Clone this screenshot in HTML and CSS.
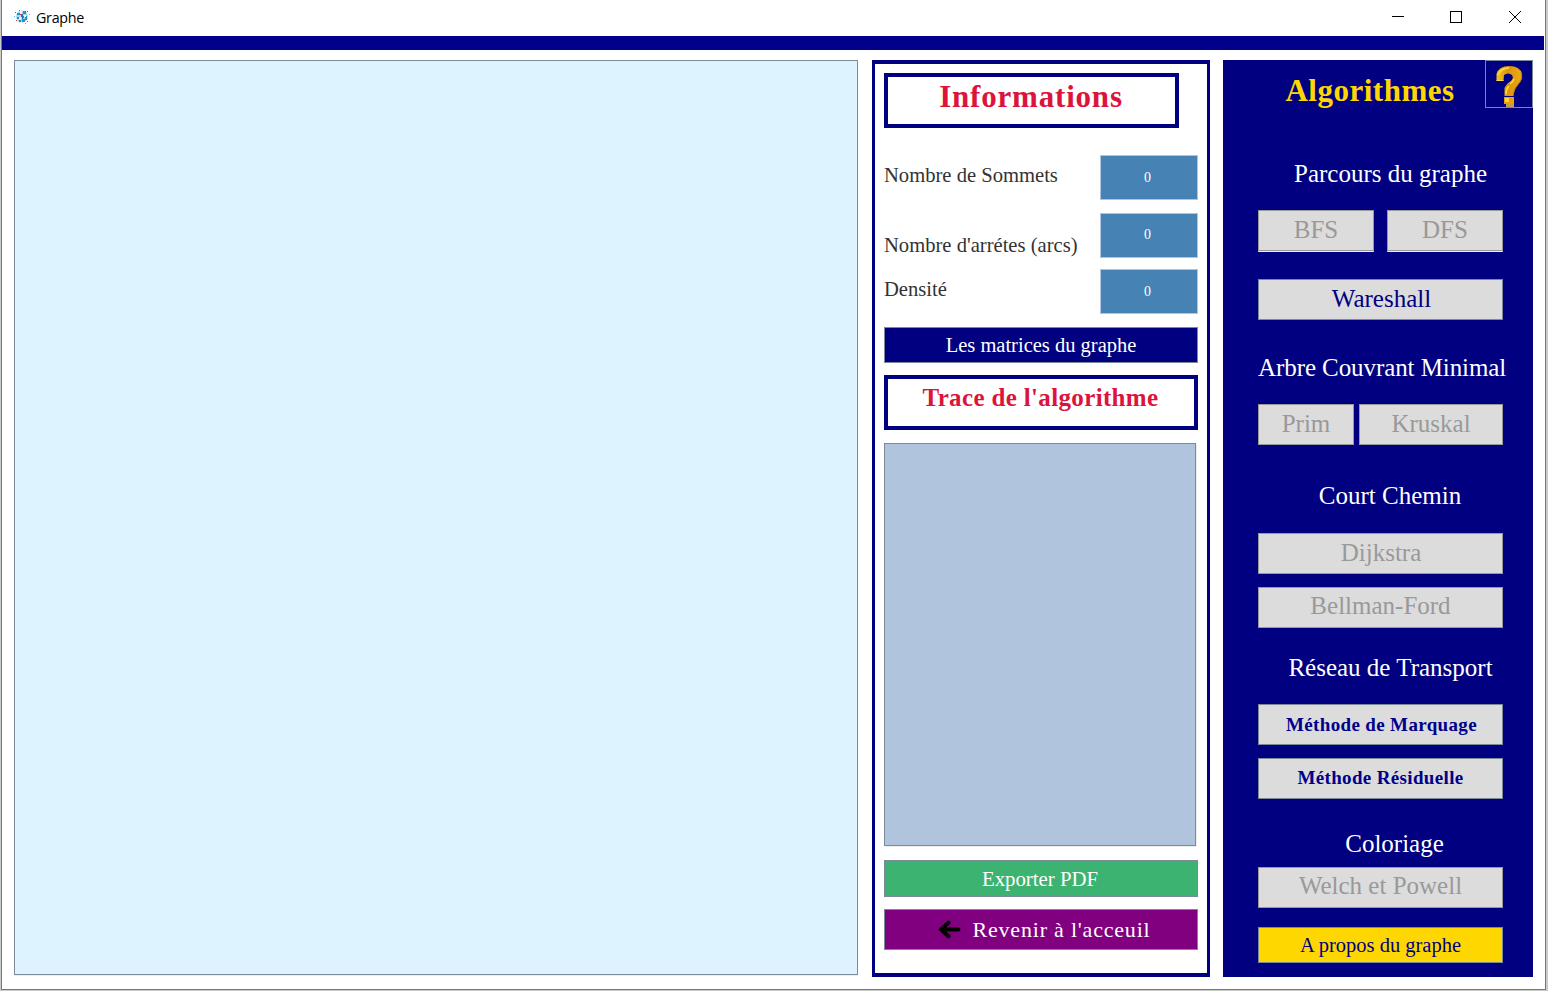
FILE: index.html
```html
<!DOCTYPE html>
<html lang="fr">
<head>
<meta charset="utf-8">
<title>Graphe</title>
<link rel="stylesheet" href="styles.css">
</head>
<body>
<div class="window">
  <header class="titlebar">
    <svg class="app-icon" width="16" height="16" viewBox="0 0 16 16">
      <circle cx="8" cy="7.500" r="6" fill="#a5daf5"/>
      <path d="M3 4h3v2H3zM9 2h3v3H9zM11 7h2v4h-2zM8 10h3v3H8zM3 8h2v2H3z" fill="#1b93dc"/>
      <path d="M6 2h2v3H6zM5 8h2v3H5zM10 6h2v2h-2z" fill="#e4f6fd"/>
      <path d="M7 5h2v3H7zM5 11h2v2H5zM8 8h1v2H8z" fill="#3b6f9c"/>
      <path d="M1 3h1v1H1zM5 1h1v1H5zM13 2h1v1h-1zM5 5h2v1H5zM2 11h1v1H2zM9 7h1v2H9zM13 12h1v1h-1z" fill="#e03a35"/>
      <path d="M0 7h1v1H0zM15 5h1v1h-1zM11 14h1v1h-1z" fill="#4ab5e8"/>
    </svg>
    <span class="app-name">Graphe</span>
    <svg class="controls" width="129" height="14" viewBox="0 0 129 14" fill="none" stroke="#000" shape-rendering="crispEdges">
      <path d="M0 6.5h12"/>
      <path d="M58.5 1.5h11v11h-11z"/>
      <path d="M117 1l12 12M129 1l-12 12" shape-rendering="auto"/>
    </svg>
  </header>
  <div class="strip"></div>
  <main class="content">
    <section class="canvas"></section>
    <section class="info">
      <h2 class="boxed boxed-info">Informations</h2>
      <div class="stat"><span class="stat-name">Nombre de Sommets</span><output class="value">0</output></div>
      <div class="stat stat-edges"><span class="stat-name low">Nombre d'arrétes (arcs)</span><output class="value value-up">0</output></div>
      <div class="stat stat-density"><span class="stat-name">Densité</span><output class="value">0</output></div>
      <button class="btn matrices">Les matrices du graphe</button>
      <h2 class="boxed boxed-trace">Trace de l'algorithme</h2>
      <div class="trace"></div>
      <button class="btn export">Exporter PDF</button>
      <button class="btn back">
        <svg width="24" height="20" viewBox="0 0 24 20"><path d="M10.500 2.700L3 9.500l7.500 6.800M3 9.500H20.500" fill="none" stroke="#000" stroke-width="4" stroke-linecap="round"/></svg>
        <span>Revenir à l'acceuil</span>
      </button>
    </section>
    <aside class="algos">
      <button class="help">
        <svg width="46" height="46" viewBox="0 0 46 46">
          <defs><linearGradient id="gold" x1="0" y1="0" x2="1" y2="0"><stop offset="0" stop-color="#f5c022"/><stop offset=".45" stop-color="#dd950c"/><stop offset="1" stop-color="#efab12"/></linearGradient></defs>
          <path d="M10.500 20L10.500 13Q13 5 23 5Q34 5 36 13Q37 19 32 24Q28 28 27.500 35L18.500 35L18.500 27Q21 22 25 20Q28 17 26 14Q22 11 18 14L17.500 20Z" fill="url(#gold)"/>
          <path d="M12 14Q15 7 23 7" fill="none" stroke="#ffdd3b" stroke-width="1.500"/>
          <path d="M20 33Q20 28 23 25M28 18Q27 21 24 23" fill="none" stroke="#ffdd3b" stroke-width="1.500"/>
          <path d="M10.500 19.500h7" stroke="#ffd83a"/>
          <path d="M35 12Q37 18 32 23Q28 27 27 34" fill="none" stroke="#c17c08"/>
          <path d="M18 36h10v7H18z" fill="#e5a00c"/><path d="M19 37h4v4h-4z" fill="#ffd63a"/><path d="M20 43h8v3h-8z" fill="#c99a4c"/>
        </svg>
      </button>
      <h1 class="title">Algorithmes</h1>
      <h3 class="group parcours">Parcours du graphe</h3>
      <div class="row row-search"><button class="btn algo off">BFS</button><button class="btn algo off">DFS</button></div>
      <button class="btn algo wareshall">Wareshall</button>
      <h3 class="group arbre">Arbre Couvrant Minimal</h3>
      <div class="row row-tree"><button class="btn algo off">Prim</button><button class="btn algo off">Kruskal</button></div>
      <h3 class="group court">Court Chemin</h3>
      <button class="btn algo off dijkstra">Dijkstra</button>
      <button class="btn algo off raised second">Bellman-Ford</button>
      <h3 class="group reseau">Réseau de Transport</h3>
      <button class="btn algo method marquage">Méthode de Marquage</button>
      <button class="btn algo method raised second">Méthode Résiduelle</button>
      <h3 class="group coloriage">Coloriage</h3>
      <button class="btn algo off raised welch">Welch et Powell</button>
      <button class="btn about">A propos du graphe</button>
    </aside>
  </main>
</div>
</body>
</html>
```
FILE: styles.css
```css
* { box-sizing: border-box; }
body { margin: 0; background: #cbcbcb; font-family: "Liberation Serif", "Times New Roman", serif; overflow: hidden; }
h1, h2, h3 { margin: 0; }
button { appearance: none; border-radius: 0; margin: 0; padding: 0; font-family: inherit; }
.window { width: 1545px; height: 990px; margin-left: 1px; background: #fff; border: 1px solid #777; border-top: 0; display: flex; flex-direction: column; }
.titlebar { height: 36px; display: flex; align-items: center; padding: 0 24px 2px 12px; }
.app-name { margin-left: 6px; font: 14.3px "Open Sans", "Noto Sans", sans-serif; letter-spacing: -.3px; color: #000; }
.controls { margin-left: auto; overflow: visible; }
.strip { height: 14px; width: 1542px; background: #00008b; }
.content { display: flex; align-items: flex-start; padding: 10px 0 0 12px; }
.canvas { width: 844px; height: 915px; background: #ddf3ff; border: 1px solid #7a8a99; box-shadow: 0 1px #eeeeee; }

.info { width: 338px; height: 917px; margin-left: 14px; border: 4px solid #000080; border-width: 4px 3px; padding: 9px 9px 0; display: flex; flex-direction: column; }
.info, .algos { flex: none; }
.boxed { height: 55px; border: 4px solid #000080; color: #dc143c; text-align: center; white-space: nowrap; flex: none; }
.boxed-info { width: 295px; font-size: 31px; line-height: 39px; letter-spacing: .8px; padding-right: 1px; }
.boxed-trace { margin-top: 12px; font-size: 25px; line-height: 37px; letter-spacing: .35px; padding-right: 1px; }
.stat { height: 45px; margin-top: 27px; display: flex; justify-content: space-between; font-size: 20.6px; color: #333; }
.stat-edges { margin-top: 13px; }
.stat-density { margin-top: 11px; }
.stat-name { line-height: 40px; white-space: nowrap; }
.low { padding-top: 12px; }
.value { width: 98px; height: 45px; background: #4682b4; border: 1px solid #b0c4de; color: #fff; font-size: 14px; line-height: 43px; text-align: center; padding-right: 3px; }
.value-up { line-height: 41px; }
.btn { flex: none; border: 1px solid #7a8a99; display: flex; justify-content: center; align-items: center; white-space: nowrap; }
.matrices { height: 36px; margin-top: 13px; background: #000080; color: #fff; font-size: 20.5px; }
.trace { width: 312px; height: 403px; margin-top: 13px; background: #b0c4de; border: 1px solid #7a8a99; box-shadow: 1px 1px #eeeeee; }
.export { height: 37px; margin-top: 14px; padding-right: 2px; background: #3cb371; color: #fff; font-size: 20.8px; }
.back { height: 41px; margin-top: 12px; gap: 11px; padding-left: 6px; background: #800080; color: #fff; font-size: 22px; letter-spacing: .8px; }

.algos { position: relative; width: 310px; height: 917px; margin-left: 13px; padding: 0 30px 0 35px; background: #000080; display: flex; flex-direction: column; }
.help { position: absolute; top: 0; right: 0; width: 48px; height: 48px; border: 1px solid #7a8a99; background: #000080; }
.help svg { display: block; }
.title { height: 60px; padding-right: 21px; text-align: center; color: #ffd700; font-size: 31px; letter-spacing: .5px; line-height: 61px; }
.group { height: 30px; line-height: 30px; font-size: 25px; font-weight: 400; color: #fff; text-align: center; white-space: nowrap; }
.parcours { margin-top: 39px; padding-left: 20px; }
.row { display: flex; }
.row-search { margin-top: 21px; gap: 13px; }
.row-search .btn { width: 116px; height: 42px; border-bottom: 1px solid #eee; box-shadow: inset 0 -1px #999; }
.row-tree { margin-top: 21px; gap: 5px; }
.row-tree .btn { width: 96px; }
.row-tree .btn:last-child { width: 144px; }
.algo { height: 41px; background: #dcdcdc; color: #000080; font-size: 25px; padding-bottom: 2px; }
.off { color: #999; border-color: #999; }
.raised { padding-bottom: 4px; }
.wareshall { margin-top: 27px; padding-left: 2px; }
.arbre { margin-top: 33px; letter-spacing: -.08px; }
.court { margin-top: 36px; padding-left: 19px; }
.dijkstra { margin-top: 22px; padding-left: 1px; }
.second { margin-top: 13px; }
.reseau { margin-top: 25px; padding-left: 20px; }
.marquage { margin-top: 21px; padding-left: 2px; }
.method { font-size: 19px; font-weight: 700; letter-spacing: .35px; color: #00008b; padding-bottom: 0; }
.method.raised { padding-bottom: 2px; }
.coloriage { margin-top: 30px; padding-left: 28px; }
.welch { margin-top: 8px; }
.about { height: 36px; margin-top: 19px; background: #ffd700; color: #000080; font-size: 20.500px; }
```
